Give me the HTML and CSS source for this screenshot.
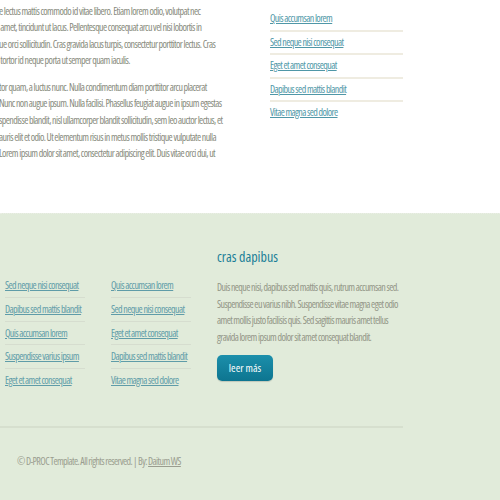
FILE: index.html
```html
<!DOCTYPE html>
<html lang="es">
<head>
<meta charset="utf-8">
<title>D-PROC Template</title>
<link rel="stylesheet" href="styles.css">
</head>
<body>
<div class="top">
  <div class="main">
    <p>e lectus mattis commodo id vitae libero. Etiam lorem odio, volutpat nec<br>&nbsp;amet, tincidunt ut lacus. Pellentesque consequat arcu vel nisi lobortis in<br>ue orci sollicitudin. Cras gravida lacus turpis, consectetur porttitor lectus. Cras<br>&nbsp;tortor id neque porta ut semper quam iaculis.</p>
    <p>tor quam, a luctus nunc. Nulla condimentum diam porttitor arcu placerat<br>Nunc non augue ipsum. Nulla facilisi. Phasellus feugiat augue in ipsum egestas<br>spendisse blandit, nisl ullamcorper blandit sollicitudin, sem leo auctor lectus, et<br>auris elit et odio. Ut elementum risus in metus mollis tristique vulputate nulla<br>Lorem ipsum dolor sit amet, consectetur adipiscing elit. Duis vitae orci dui, ut</p>
  </div>
  <ul class="side">
    <li><a href="#">Quis accumsan lorem</a></li>
    <li><a href="#">Sed neque nisi consequat</a></li>
    <li><a href="#">Eget et amet consequat</a></li>
    <li><a href="#">Dapibus sed mattis blandit</a></li>
    <li><a href="#">Vitae magna sed dolore</a></li>
  </ul>
</div>
<footer class="green">
  <div class="cols">
    <ul class="flinks">
      <li><a href="#">Sed neque nisi consequat</a></li>
      <li><a href="#">Dapibus sed mattis blandit</a></li>
      <li><a href="#">Quis accumsan lorem</a></li>
      <li><a href="#">Suspendisse varius ipsum</a></li>
      <li><a href="#">Eget et amet consequat</a></li>
    </ul>
    <ul class="flinks">
      <li><a href="#">Quis accumsan lorem</a></li>
      <li><a href="#">Sed neque nisi consequat</a></li>
      <li><a href="#">Eget et amet consequat</a></li>
      <li><a href="#">Dapibus sed mattis blandit</a></li>
      <li><a href="#">Vitae magna sed dolore</a></li>
    </ul>
    <div class="about">
      <h2>cras dapibus</h2>
      <p>Duis neque nisi, dapibus sed mattis quis, rutrum accumsan sed.<br>Suspendisse eu varius nibh. Suspendisse vitae magna eget odio<br>amet mollis justo facilisis quis. Sed sagittis mauris amet tellus<br>gravida lorem ipsum dolor sit amet consequat blandit.</p>
      <a class="btn" href="#">leer más</a>
    </div>
  </div>
  <div class="rule"></div>
  <p class="copy">© D-PROC Template. All rights reserved. | By: <a href="#">Daitum WS</a></p>
</footer>
</body>
</html>
```
FILE: styles.css
```css
html, body {
  margin: 0;
  padding: 0;
}
body {
  font-family: "Open Sans", "Roboto", "Liberation Sans", sans-serif;
  font-stretch: 75%;
  font-size: 10px;
  letter-spacing: -0.6px;
  color: #878a7c;
  background: #e1ebda;
  overflow: hidden;
}
a {
  color: #4f97a7;
  text-decoration: underline;
}
.top {
  background: #ffffff;
  height: 213px;
  display: grid;
  grid-template-columns: 270px 133px;
  align-items: start;
}
.main {
  padding-top: 2.5px;
  margin-left: -1px;
  white-space: nowrap;
  overflow: hidden;
}
.main p {
  margin: 0 0 10px;
  line-height: 16.6px;
}
.side {
  list-style: none;
  margin: 8px 0 0;
  padding: 0;
  white-space: nowrap;
}
.side li {
  line-height: 21.5px;
  border-bottom: 2px solid #efece1;
}
.side li:last-child {
  border-bottom: none;
}
.green {
  border-top: 1px dotted #eaeee5;
  height: 287px;
}
.cols {
  display: grid;
  grid-template-columns: 80px 80px 190px;
  column-gap: 26px;
  padding: 33px 0 0 5px;
  align-items: start;
}
.flinks {
  list-style: none;
  margin: 27px 0 0;
  padding: 0;
  white-space: nowrap;
}
.flinks li {
  line-height: 22.75px;
  border-bottom: 1px solid #d6ddcf;
}
.flinks li:last-child {
  border-bottom: none;
}
.flinks a {
  color: #5f9ca8;
}
.about h2 {
  margin: 0 0 12px;
  font-size: 14px;
  line-height: 20px;
  font-weight: normal;
  color: #1a7e97;
  letter-spacing: 0;
}
.about p {
  margin: 0 0 10px;
  line-height: 16.5px;
  white-space: nowrap;
  color: #929586;
}
.btn {
  display: block;
  width: 56px;
  height: 26px;
  line-height: 26px;
  text-align: center;
  color: #ffffff;
  text-decoration: none;
  font-size: 11px;
  letter-spacing: 0;
  border-radius: 5px;
  background: linear-gradient(#1c8fab, #0d7590);
  box-shadow: 0 1px 1px rgba(0,0,0,0.15);
}
.rule {
  width: 403px;
  height: 2px;
  background: #d6dfce;
  margin-top: 34px;
}
.copy {
  margin: 25px 0 0 17px;
  line-height: 16px;
  color: #9a9d8f;
}
.copy a {
  color: #9a9d8f;
}
```
